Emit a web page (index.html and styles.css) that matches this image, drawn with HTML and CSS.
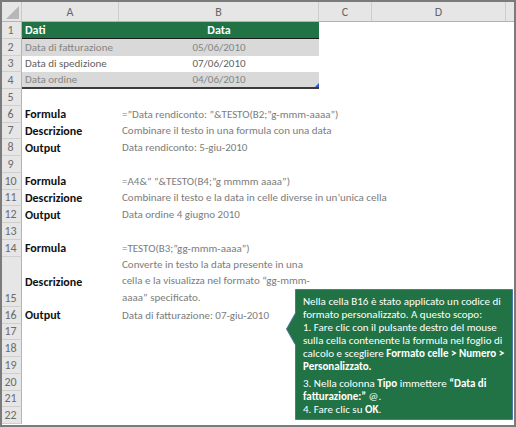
FILE: index.html
```html
<!DOCTYPE html>
<html lang="it">
<head>
<meta charset="utf-8">
<title>TESTO</title>
<link rel="stylesheet" href="styles.css">
</head>
<body>
<div class="frame">
  <div class="colhead">
    <div class="corner"><svg class="corner-tri" width="13" height="13" viewBox="0 0 13 13"><polygon points="13,0 13,13 0,13" fill="#b7b7b7"/></svg></div>
    <div class="ch">A</div>
    <div class="ch">B</div>
    <div class="ch">C</div>
    <div class="ch">D</div>
    <div class="ch end"></div>
  </div>

  <div class="row"><div class="rh">1</div><div class="c a th">Dati</div><div class="c b th center">Data</div><div class="c"></div><div class="c"></div><div class="c"></div></div>
  <div class="row"><div class="rh">2</div><div class="c a band">Data di fatturazione</div><div class="c b band center">05/06/2010</div><div class="c"></div><div class="c"></div><div class="c"></div></div>
  <div class="row"><div class="rh">3</div><div class="c a plain">Data di spedizione</div><div class="c b plain center">07/06/2010</div><div class="c"></div><div class="c"></div><div class="c"></div></div>
  <div class="row"><div class="rh">4</div><div class="c a band last">Data ordine</div><div class="c b band last center">04/06/2010<span class="handle"></span></div><div class="c"></div><div class="c"></div><div class="c"></div></div>
  <div class="row"><div class="rh">5</div><div class="c"></div><div class="c"></div><div class="c"></div><div class="c"></div><div class="c"></div></div>
  <div class="row"><div class="rh">6</div><div class="c a lbl">Formula</div><div class="c b val">=”Data rendiconto: ”&amp;TESTO(B2;”g-mmm-aaaa”)</div><div class="c"></div><div class="c"></div><div class="c"></div></div>
  <div class="row"><div class="rh">7</div><div class="c a lbl">Descrizione</div><div class="c b val">Combinare il testo in una formula con una data</div><div class="c"></div><div class="c"></div><div class="c"></div></div>
  <div class="row"><div class="rh">8</div><div class="c a lbl">Output</div><div class="c b val">Data rendiconto: 5-giu-2010</div><div class="c"></div><div class="c"></div><div class="c"></div></div>
  <div class="row"><div class="rh">9</div><div class="c"></div><div class="c"></div><div class="c"></div><div class="c"></div><div class="c"></div></div>
  <div class="row"><div class="rh">10</div><div class="c a lbl">Formula</div><div class="c b val">=A4&amp;” ”&amp;TESTO(B4;”g mmmm aaaa”)</div><div class="c"></div><div class="c"></div><div class="c"></div></div>
  <div class="row"><div class="rh">11</div><div class="c a lbl">Descrizione</div><div class="c b val">Combinare il testo e la data in celle diverse in un’unica cella</div><div class="c"></div><div class="c"></div><div class="c"></div></div>
  <div class="row"><div class="rh">12</div><div class="c a lbl">Output</div><div class="c b val">Data ordine 4 giugno 2010</div><div class="c"></div><div class="c"></div><div class="c"></div></div>
  <div class="row"><div class="rh">13</div><div class="c"></div><div class="c"></div><div class="c"></div><div class="c"></div><div class="c"></div></div>
  <div class="row"><div class="rh">14</div><div class="c a lbl">Formula</div><div class="c b val">=TESTO(B3;”gg-mmm-aaaa”)</div><div class="c"></div><div class="c"></div><div class="c"></div></div>
  <div class="row tall"><div class="rh bottom">15</div><div class="c a lbl">Descrizione</div><div class="c b val wrap"><span>Converte in testo la data presente in una</span><span>cella e la visualizza nel formato “gg-mmm-</span><span>aaaa” specificato.</span></div><div class="c"></div><div class="c"></div><div class="c"></div></div>
  <div class="row"><div class="rh">16</div><div class="c a lbl">Output</div><div class="c b val">Data di fatturazione: 07-giu-2010</div><div class="c"></div><div class="c"></div><div class="c"></div></div>
  <div class="row"><div class="rh">17</div><div class="c"></div><div class="c"></div><div class="c"></div><div class="c"></div><div class="c"></div></div>
  <div class="row"><div class="rh">18</div><div class="c"></div><div class="c"></div><div class="c"></div><div class="c"></div><div class="c"></div></div>
  <div class="row"><div class="rh">19</div><div class="c"></div><div class="c"></div><div class="c"></div><div class="c"></div><div class="c"></div></div>
  <div class="row"><div class="rh">20</div><div class="c"></div><div class="c"></div><div class="c"></div><div class="c"></div><div class="c"></div></div>
  <div class="row"><div class="rh">21</div><div class="c"></div><div class="c"></div><div class="c"></div><div class="c"></div><div class="c"></div></div>
  <div class="row"><div class="rh">22</div><div class="c"></div><div class="c"></div><div class="c"></div><div class="c"></div><div class="c"></div></div>

  <div class="callout">
    <svg class="callout-shape" width="230" height="133" viewBox="0 0 230 133">
      <polygon points="10.5,0.5 227.5,0.5 227.5,130.5 10.5,130.5 10.5,56 1.5,40 10.5,24" fill="#217346" stroke="#4a78a8" stroke-width="1"/>
    </svg>
    <div class="callout-text">
      <div class="ln">Nella cella B16 è stato applicato un codice di</div>
      <div class="ln">formato personalizzato. A questo scopo:</div>
      <div class="ln">1. Fare clic con il pulsante destro del mouse</div>
      <div class="ln">sulla cella contenente la formula nel foglio di</div>
      <div class="ln">calcolo e scegliere <b>Formato celle &gt; Numero &gt;</b></div>
      <div class="ln"><b>Personalizzato.</b></div>
      <div class="ln gap">3. Nella colonna <b>Tipo</b> immettere <b>“Data di</b></div>
      <div class="ln"><b>fatturazione:”</b> @.</div>
      <div class="ln">4. Fare clic su <b>OK</b>.</div>
    </div>
  </div>
</div>
</body>
</html>
```

FILE: styles.css
```css
* { box-sizing: border-box; }
html, body { margin: 0; padding: 0; background: #fff; }
body { font-family: Carlito, Lato, "Open Sans", sans-serif; }

.frame {
  position: relative;
  width: 516px;
  height: 427px;
  border: 2px solid #7b7b7b;
  overflow: hidden;
  background: #fff;
}

.colhead {
  display: grid;
  grid-template-columns: 20px 97px 200px 53px 134px 1fr;
  height: 20px;
  background: #e6e6e6;
  border-bottom: 1px solid #b3b3b3;
}
.corner {
  display: flex;
  align-items: flex-end;
  justify-content: flex-end;
  padding: 0 2px 2px 0;
  border-right: 1px solid #c9c9c9;
}
.corner-tri { display: block; }
.ch {
  display: flex;
  align-items: center;
  justify-content: center;
  font-size: 12px;
  color: #666;
  border-right: 1px solid #cdcdcd;
}
.ch.end { border-right: none; }

.row {
  display: grid;
  grid-template-columns: 20px 97px 200px 53px 134px 1fr;
  height: 16.75px;
}
.row.tall { height: 50.25px; }

.rh {
  display: flex;
  align-items: center;
  justify-content: center;
  padding-right: 2px;
  background: #e6e6e6;
  border-right: 1px solid #b3b3b3;
  border-bottom: 1px solid #cfcfcf;
  font-size: 12px;
  color: #6b6b6b;
}
.rh.bottom { align-items: flex-end; padding-bottom: 1px; }

.c {
  display: flex;
  align-items: center;
  padding-left: 3px;
  font-size: 11px;
  white-space: nowrap;
  position: relative;
}
.c.center { justify-content: center; padding-left: 0; }
.c.b { overflow: visible; }

.th { background: #217346; color: #fff; font-weight: 700; font-size: 12px; border-bottom: 1.5px solid #1a1a1a; }
.band { background: #d9d9d9; color: #858585; }
.plain { color: #5f5f5f; }
.last { border-bottom: 2px solid #3a3a3a; }

.handle {
  position: absolute;
  right: 0;
  bottom: 0;
  width: 0;
  height: 0;
  border-left: 4px solid transparent;
  border-bottom: 4px solid #3355cc;
}

.lbl { color: #111; font-weight: 700; font-size: 12px; }
.val { color: #7c7c7c; }
.val.wrap { flex-direction: column; align-items: flex-start; justify-content: center; }
.val.wrap span { display: block; line-height: 16.75px; }

.callout {
  position: absolute;
  left: 283px;
  top: 287px;
  width: 230px;
  height: 133px;
}
.callout-shape { position: absolute; left: 0; top: 0; }
.callout-text {
  position: absolute;
  left: 18px;
  top: 6px;
  color: #fff;
  font-size: 11px;
  line-height: 13px;
  white-space: nowrap;
}
.callout-text b { font-weight: 700; }
.ln.gap { margin-top: 4px; }
```
